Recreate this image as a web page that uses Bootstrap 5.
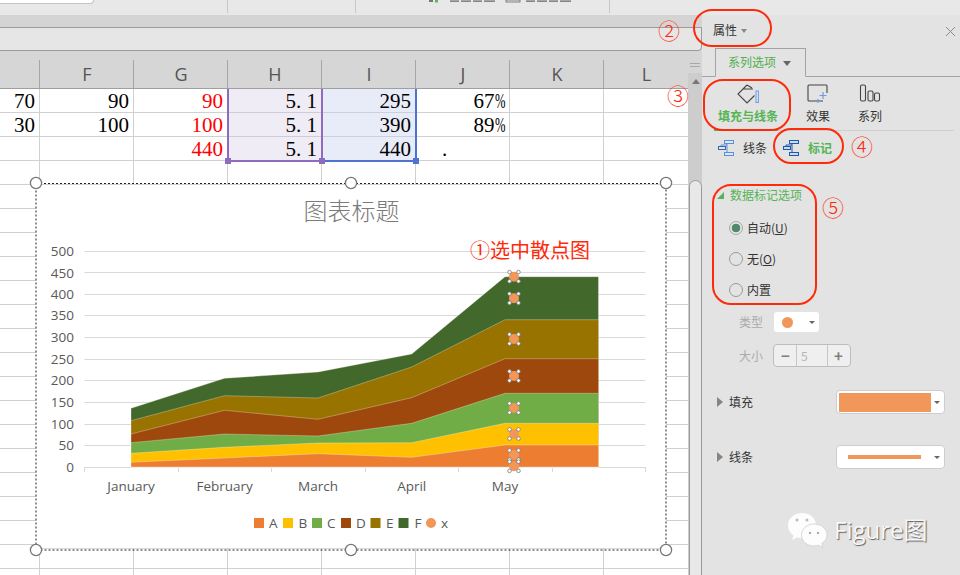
<!DOCTYPE html>
<html lang="zh">
<head>
<meta charset="utf-8">
<title>Figure</title>
<link href="https://cdn.jsdelivr.net/npm/bootstrap@5.3.0/dist/css/bootstrap.min.css" rel="stylesheet">
<style>
html,body{margin:0;height:100%}
body{width:960px;height:575px;overflow:hidden;position:relative;background:#e3e3e3;font-family:"Noto Sans CJK SC","Liberation Sans",sans-serif;font-size:12px;color:#333}
.topstrip{height:15px;background:#e8e8e8;position:relative;display:flex}
.topbox{width:94px;height:4px;background:#fff;border:solid #c4c4c4;border-width:0 1px 1px 0;border-bottom-right-radius:4px}
.topcell{height:13px;border-right:1px solid #c8c8c8}
.topw1{width:134px}.topw2{width:128px}.topw3{width:254px;position:relative}
.topmarks{position:absolute;left:73px;top:0}
.workarea{height:560px}
.sheetcol{width:702px}
.sheetband{height:13px;background:#d4d4d4;border-bottom:1px solid #9b9b9b}
.formulabar{height:23px;background:#e6e6e6;border:solid #9b9b9b;border-width:0 1px 1px 0;border-bottom-right-radius:4px}
.gridarea{height:524px;position:relative}
.sheetpane{width:688px;height:524px;position:relative;overflow:hidden;background:#fff}
.scrollstrip{width:14px;background:#cdcdcd;position:relative}
.scrollhead{height:22px;background:#d6d6d6;position:relative}
.scrollgrip{position:absolute;left:2px;top:12px;width:10px;height:4px;border:solid #a8a8a8;border-width:1px 0}
.scrollup{position:absolute;left:4px;top:28px;border:solid transparent;border-width:0 4px 5px;border-bottom-color:#777}
.scrollthumb{position:absolute;left:1px;right:0;top:129px;bottom:-2px;background:#e8e8e8;border:1px solid #999;border-radius:7px 7px 0 0}
table.sheet{width:688px;table-layout:fixed;border-collapse:separate;border-spacing:0;margin:0}
.sheet th{height:38px;background:#d6d6d6 linear-gradient(#a6a6a6,#a6a6a6) right bottom/1px 28px no-repeat;border-bottom:1px solid #9f9f9f;font:400 18px "Open Sans",sans-serif;color:#555;text-align:center;padding:9px 0 0}
.sheet td{height:24px;max-height:24px;padding:0 4px 0 0;border:solid #d0d0d0;border-width:0 1px 1px 0;background:#fff;text-align:right;font:21px/22px "Liberation Serif",serif;color:#000;overflow:hidden;white-space:nowrap}
.sheet td.redval{color:#f00}
.sheet td.selh{background:#f0ecf6;border-color:#cfcad8}
.sheet td.seli{background:#e8ecf8;border-color:#cbd0de}
.sheet td.dotcell{text-align:left;padding-left:26px}
.pct{display:inline-block;transform:scaleX(.6);transform-origin:right center;margin-left:-7px}
.col1{width:40px}.colstd{width:94px}.collast{width:85px}
.overlay{position:absolute;left:0;top:38px}
.overlay text{font-family:"Open Sans","Noto Sans CJK SC",sans-serif;font-size:13.5px;fill:#595959}
.overlay .charttitle{font-family:"Noto Sans CJK SC",sans-serif;font-size:24px;fill:#7a7a7a;font-weight:300}
.overlay .redtext{font-family:"Noto Sans CJK SC",sans-serif;font-size:20px;fill:#ff2a0a}
.sidepane{width:258px;background:#e3e3e3;position:relative}
.panehead{height:33px;padding:6px 11px 0;position:relative}
.panetitle{background:none;border:0;padding:0;font-size:12px;color:#333;line-height:18px}
.panetitle.dropdown-toggle::after{border-top:4px solid #888;border-left:3px solid transparent;border-right:3px solid transparent;margin-left:4px;vertical-align:2px}
.paneclose{position:absolute;right:4px;top:11px}
.nav-tabs.panetabs{height:29px;padding-left:13px;border-bottom:1px solid #a3a3a3;--bs-nav-tabs-border-radius:0;--bs-nav-tabs-border-width:1px}
.panetabs .nav-link,.panetabs .nav-link.active{height:29px;width:91px;padding:4px 0 0 12px;font-size:12px;line-height:18px;color:#4fb04e;background:#e3e3e3;border:1px solid #a3a3a3;border-bottom-color:#e3e3e3;text-align:left}
.panetabs .nav-link.dropdown-toggle::after{border-top:5px solid #666;border-left:4px solid transparent;border-right:4px solid transparent;margin-left:7px;vertical-align:1px}
.iconrow{height:54px;margin:0 6px 0 13px;border-bottom:1px solid #cfcfcf;padding-left:3px;position:relative}
.iconitem{display:flex;flex-direction:column;align-items:center;height:53px;padding-top:7px;font-size:12px;line-height:18px;white-space:nowrap}
.iconitem svg{height:22px;margin-bottom:1px}
.iconfirst{width:60px;color:#55b454;font-weight:700}
.iconsecond{width:24px;margin-left:28px}
.iconthird{width:24px;margin-left:28px}
.greenbar{position:absolute;left:-1px;bottom:-1px;width:64px;height:2px;background:#55b454}
.subtabs{height:34px;padding-left:16px}
.subtabs svg{flex:none}
.subgap{margin-left:9px}
.subgreen{color:#55b454;font-weight:700}
.sectionhead{height:22px;margin-top:19px;padding-left:15px;color:#55b454}
.sectionhead .tri{margin-right:6px}
.optiongroup{margin-top:6px}
.optionrow{height:31px;margin:0;padding:0 0 0 27px;display:flex;align-items:center;min-height:0}
.optionrow .form-check-input{width:14px;height:14px;margin:0 4px 0 0;float:none;background-color:#e3e3e3;border:1px solid #999;flex:none}
.optionrow .form-check-input:checked{background-image:radial-gradient(circle,#4f8a6b 0 4px,transparent 4.6px);background-color:#e3e3e3;border-color:#a8a8a8}
.optionrow .form-check-label{font-size:12px;color:#333}
.disabledrow{height:20px;margin-top:7px;padding-left:37px;color:#ababab}
.typepicker{width:45px;height:20px;margin-left:11px;background:#fff;border:0;border-radius:3px;padding:0 0 0 8px;display:flex;align-items:center;justify-content:space-between;position:relative}
.typedot{width:11px;height:11px;border-radius:50%;background:#f1975a}
.typepicker.dropdown-toggle::after,.swatchpicker.dropdown-toggle::after{border-top:3px solid #666;border-left:3px solid transparent;border-right:3px solid transparent;margin:0 4px 0 0;flex:none}
.disabledrow.sizerow{height:23px;margin-top:12px}
.spinbox.input-group{width:78px;height:23px;margin-left:10px;flex-wrap:nowrap;background:#efefef;border:1px solid #bdbdbd;border-radius:4px}
.spinbox .btn{width:23px;padding:0;border:0;border-radius:0;color:#808080;font-size:15px;font-weight:700;line-height:20px;background:none}
.spinbox .input-group-text{flex:1;padding:0 0 0 4px;border:solid #c6c6c6;border-width:0 1px;border-radius:0;margin:0;background:none;color:#b5b5b5;font-size:12px}
.proprow{height:24px;padding-left:15px}
.fillrow{margin-top:23px}
.linerow{margin-top:31px}
.tri{flex:none;margin-right:6px}
.swatchpicker{margin-left:auto;margin-right:15px;width:109px;height:24px;background:#fff;border:1px solid #cdcdcd;border-radius:4px;padding:2px 0 2px 2px;display:flex;align-items:center;justify-content:space-between}
.swatchfill{width:92px;height:19px;background:#f1975a}
.swatchline{width:73px;height:4px;background:#f1975a;margin-left:9px}
.brandrow{margin-top:43px;padding-left:85px;height:36px}
.brandtext{font:24px/36px "Open Sans","Noto Sans CJK SC",sans-serif;color:#f7f7f7;text-shadow:1px 1px 1px #5f5f5f;margin-left:6px;white-space:nowrap}
.callout{position:absolute;border:2px solid #ff2a0a;pointer-events:none}
.callout2{left:693px;top:9px;width:79px;height:38px;border-radius:19px}
.callout3{left:703px;top:79px;width:88px;height:52px;border-radius:20px}
.callout4{left:773px;top:128px;width:71px;height:36px;border-radius:18px}
.callout5{left:712px;top:184px;width:105px;height:121px;border-radius:19px}
.circlenum{position:absolute;color:#ff2a0a;font-size:22px;line-height:24px;font-family:"Noto Sans CJK SC",sans-serif;font-weight:300}
.num2{left:658px;top:17px}.num3{left:667px;top:82px}.num4{left:851px;top:133px}.num5{left:822px;top:194px}
</style>
</head>
<body>
<div class="topstrip">
  <div class="topbox"></div>
  <div class="topcell topw1"></div>
  <div class="topcell topw2"></div>
  <div class="topcell topw3">
    <svg class="topmarks" width="150" height="3" viewBox="0 0 150 3"><rect x="0" y="0" width="4" height="2" fill="#777"/><rect x="6" y="0" width="3" height="2.500" fill="#5cb85c"/><g fill="#444"><rect x="21" y=".6" width="9" height="1"/><rect x="32" y=".6" width="10" height="1"/><rect x="44" y=".6" width="9" height="1"/><rect x="55" y=".6" width="11" height="1"/><rect x="97" y=".6" width="9" height="1"/><rect x="108" y=".6" width="10" height="1"/><rect x="120" y=".6" width="9" height="1"/><rect x="131" y=".6" width="11" height="1"/></g><rect x="77" y="0" width="14" height="2" fill="none" stroke="#666" stroke-width=".8"/></svg>
  </div>
</div>
<div class="workarea d-flex">
  <div class="sheetcol d-flex flex-column">
    <div class="sheetband"></div>
    <div class="formulabar"></div>
    <div class="gridarea d-flex">
      <div class="sheetpane">
        <table class="sheet">
          <colgroup><col class="col1"><col class="colstd"><col class="colstd"><col class="colstd"><col class="colstd"><col class="colstd"><col class="colstd"><col class="collast"></colgroup>
          <thead><tr><th></th><th>F</th><th>G</th><th>H</th><th>I</th><th>J</th><th>K</th><th>L</th></tr></thead>
          <tbody>
            <tr><td>70</td><td>90</td><td class="redval">90</td><td class="selh">5. 1</td><td class="seli">295</td><td>67<span class="pct">%</span></td><td></td><td></td></tr>
            <tr><td>30</td><td>100</td><td class="redval">100</td><td class="selh">5. 1</td><td class="seli">390</td><td>89<span class="pct">%</span></td><td></td><td></td></tr>
            <tr><td></td><td></td><td class="redval">440</td><td class="selh">5. 1</td><td class="seli">440</td><td class="dotcell">.</td><td></td><td></td></tr>
            <tr><td></td><td></td><td></td><td></td><td></td><td></td><td></td><td></td></tr>
            <tr><td></td><td></td><td></td><td></td><td></td><td></td><td></td><td></td></tr>
            <tr><td></td><td></td><td></td><td></td><td></td><td></td><td></td><td></td></tr>
            <tr><td></td><td></td><td></td><td></td><td></td><td></td><td></td><td></td></tr>
            <tr><td></td><td></td><td></td><td></td><td></td><td></td><td></td><td></td></tr>
            <tr><td></td><td></td><td></td><td></td><td></td><td></td><td></td><td></td></tr>
            <tr><td></td><td></td><td></td><td></td><td></td><td></td><td></td><td></td></tr>
            <tr><td></td><td></td><td></td><td></td><td></td><td></td><td></td><td></td></tr>
            <tr><td></td><td></td><td></td><td></td><td></td><td></td><td></td><td></td></tr>
            <tr><td></td><td></td><td></td><td></td><td></td><td></td><td></td><td></td></tr>
            <tr><td></td><td></td><td></td><td></td><td></td><td></td><td></td><td></td></tr>
            <tr><td></td><td></td><td></td><td></td><td></td><td></td><td></td><td></td></tr>
            <tr><td></td><td></td><td></td><td></td><td></td><td></td><td></td><td></td></tr>
            <tr><td></td><td></td><td></td><td></td><td></td><td></td><td></td><td></td></tr>
            <tr><td></td><td></td><td></td><td></td><td></td><td></td><td></td><td></td></tr>
            <tr><td></td><td></td><td></td><td></td><td></td><td></td><td></td><td></td></tr>
            <tr><td></td><td></td><td></td><td></td><td></td><td></td><td></td><td></td></tr>
            <tr><td></td><td></td><td></td><td></td><td></td><td></td><td></td><td></td></tr>
          </tbody>
        </table>
        <svg class="overlay" width="688" height="486" viewBox="0 89 688 486">
          <defs>
            <g id="pt">
              <circle cx="0" cy="0" r="5" fill="#f1975a"/>
              <g fill="#fff" stroke="#777" stroke-width=".8"><circle cx="-4.500" cy="-4.600" r="1.800"/><circle cx="4.500" cy="-4.600" r="1.800"/><circle cx="-4.500" cy="4.600" r="1.800"/><circle cx="4.500" cy="4.600" r="1.800"/></g>
            </g>
          </defs>
          <!-- selection -->
          <rect x="227" y="89" width="2" height="73" fill="#8f6bc0"/>
          <rect x="321" y="89" width="2" height="73" fill="#8f6bc0"/>
          <rect x="415" y="89" width="2" height="73" fill="#4f72d0"/>
          <rect x="227" y="160" width="95" height="2" fill="#8f6bc0"/>
          <rect x="322" y="160" width="94" height="2" fill="#4f72d0"/>
          <rect x="225" y="158" width="6" height="6" fill="#8f6bc0"/>
          <rect x="319" y="158" width="6" height="6" fill="#8f6bc0"/>
          <rect x="413" y="158" width="6" height="6" fill="#4f72d0"/>
          <!-- chart frame -->
          <rect x="36" y="184" width="630" height="365" fill="#fff"/>
          <line x1="36" y1="184.500" x2="666" y2="184.500" stroke="#d0d0d0"/>
          <line x1="36" y1="548.500" x2="666" y2="548.500" stroke="#d8d8d8"/>
          <rect x="36" y="183.500" width="630" height="366.500" fill="none" stroke="#222" stroke-dasharray="2 2"/>
          <!-- gridlines -->
          <g stroke="#d9d9d9" stroke-width="1">
            <line x1="84.500" x2="645.500" y1="251.500" y2="251.500"/><line x1="84.500" x2="645.500" y1="272.500" y2="272.500"/>
            <line x1="84.500" x2="645.500" y1="294.500" y2="294.500"/><line x1="84.500" x2="645.500" y1="315.500" y2="315.500"/>
            <line x1="84.500" x2="645.500" y1="337.500" y2="337.500"/><line x1="84.500" x2="645.500" y1="359.500" y2="359.500"/>
            <line x1="84.500" x2="645.500" y1="380.500" y2="380.500"/><line x1="84.500" x2="645.500" y1="402.500" y2="402.500"/>
            <line x1="84.500" x2="645.500" y1="424.500" y2="424.500"/><line x1="84.500" x2="645.500" y1="445.500" y2="445.500"/>
            <line x1="84.500" x2="645.500" y1="467.500" y2="467.500"/>
            <line x1="84.500" x2="84.500" y1="467" y2="472"/><line x1="178.500" x2="178.500" y1="467" y2="472"/>
            <line x1="271.500" x2="271.500" y1="467" y2="472"/><line x1="365.500" x2="365.500" y1="467" y2="472"/>
            <line x1="458.500" x2="458.500" y1="467" y2="472"/><line x1="552.500" x2="552.500" y1="467" y2="472"/>
            <line x1="645.500" x2="645.500" y1="467" y2="472"/>
          </g>
          <!-- stacked areas -->
          <g stroke="#fff" stroke-opacity=".3" stroke-width="1">
            <polygon fill="#43682b" points="131,408.3 224.5,378.3 318,372 411.7,354 505,276.7 598.5,276.7 598.5,467 131,467"/>
            <polygon fill="#997300" points="131,420.7 224.5,395.7 318,398 411.7,367 505,319.7 598.5,319.7 598.5,467 131,467"/>
            <polygon fill="#9e480e" points="131,434 224.5,410.3 318,419.3 411.7,397.7 505,358.7 598.5,358.7 598.5,467 131,467"/>
            <polygon fill="#70ad47" points="131,442.7 224.5,434 318,436 411.7,423.3 505,393.3 598.5,393.3 598.5,467 131,467"/>
            <polygon fill="#ffc000" points="131,453.3 224.5,447.3 318,443 411.7,442.7 505,423.3 598.5,423.3 598.5,467 131,467"/>
            <polygon fill="#ed7d31" points="131,462.3 224.5,458 318,453.7 411.7,457.3 505,445 598.5,445 598.5,467 131,467"/>
          </g>
          <!-- markers -->
          <use href="#pt" x="514" y="276.700"/><use href="#pt" x="514" y="298.300"/><use href="#pt" x="514" y="339"/>
          <use href="#pt" x="514" y="376"/><use href="#pt" x="514" y="408"/><use href="#pt" x="514" y="434"/>
          <use href="#pt" x="514" y="455"/><use href="#pt" x="514" y="466.300"/>
          <!-- chart text -->
          <text class="charttitle" x="351.500" y="220" text-anchor="middle">图表标题</text>
          <text class="redtext" x="470" y="258">①选中散点图</text>
          <g text-anchor="end">
            <text x="74" y="256">500</text><text x="74" y="278">450</text><text x="74" y="299">400</text>
            <text x="74" y="320">350</text><text x="74" y="342">300</text><text x="74" y="364">250</text>
            <text x="74" y="385">200</text><text x="74" y="407">150</text><text x="74" y="429">100</text>
            <text x="74" y="450">50</text><text x="74" y="472">0</text>
          </g>
          <g text-anchor="middle">
            <text x="131" y="491">January</text><text x="224.700" y="491">February</text><text x="318" y="491">March</text>
            <text x="411.700" y="491">April</text><text x="505" y="491">May</text>
          </g>
          <!-- legend -->
          <rect x="254" y="518" width="10" height="10" fill="#ed7d31"/><text x="269" y="528">A</text>
          <rect x="283" y="518" width="10" height="10" fill="#ffc000"/><text x="298.500" y="528">B</text>
          <rect x="312" y="518" width="10" height="10" fill="#70ad47"/><text x="327" y="528">C</text>
          <rect x="341" y="518" width="10" height="10" fill="#9e480e"/><text x="356" y="528">D</text>
          <rect x="370.500" y="518" width="10" height="10" fill="#997300"/><text x="386" y="528">E</text>
          <rect x="398.500" y="518" width="10" height="10" fill="#43682b"/><text x="414.500" y="528">F</text>
          <circle cx="431" cy="523" r="5" fill="#f1975a"/><text x="441" y="528">x</text>
          <!-- frame handles -->
          <g fill="#fff" stroke="#777" stroke-width="1.300">
            <circle cx="36" cy="183" r="5.600"/><circle cx="351" cy="183" r="5.600"/><circle cx="666" cy="183" r="5.600"/>
            <circle cx="36" cy="550" r="5.600"/><circle cx="351" cy="550" r="5.600"/><circle cx="666" cy="550" r="5.600"/>
          </g>
        </svg>
      </div>
      <div class="scrollstrip">
        <div class="scrollhead"><span class="scrollgrip"></span></div>
        <span class="scrollup"></span>
        <div class="scrollthumb"></div>
      </div>
    </div>
  </div>

  <div class="sidepane d-flex flex-column">
    <div class="panehead">
      <button class="panetitle dropdown-toggle" type="button">属性</button>
      <svg class="paneclose" width="11" height="11" viewBox="0 0 11 11"><path d="M1 1 10 10M10 1 1 10" stroke="#8a8a8a" stroke-width="1" fill="none"/></svg>
    </div>
    <ul class="nav nav-tabs panetabs">
      <li class="nav-item"><a class="nav-link active dropdown-toggle" href="#">系列选项</a></li>
    </ul>
    <div class="iconrow d-flex">
      <div class="iconitem iconfirst">
        <svg width="26" height="22" viewBox="0 0 26 22"><path d="M12 1 3 10l9 9 7.500-7.500M12 1l5 3M8 5h10" fill="none" stroke="#444" stroke-width="1.100"/><rect x="21" y="7" width="2.400" height="11.500" fill="#dbe6f7" stroke="#6f9be0" stroke-width="1"/></svg>
        <span>填充与线条</span>
      </div>
      <div class="iconitem iconsecond">
        <svg width="24" height="22" viewBox="0 0 24 22"><path d="M17 17H3a1 1 0 0 1-1-1V2a1 1 0 0 1 1-1h17a1 1 0 0 1 1 1v7" fill="none" stroke="#444" stroke-width="1.100"/><path d="M17 8v7M13.500 11.500h7M12 15v4M10 17h4" stroke="#6f9be0" stroke-width="1.200" fill="none"/></svg>
        <span>效果</span>
      </div>
      <div class="iconitem iconthird">
        <svg width="24" height="22" viewBox="0 0 24 22"><g fill="none" stroke="#444" stroke-width="1.100"><rect x="2.500" y="1" width="5" height="16" rx="1.500"/><rect x="10" y="7" width="5" height="10" rx="1.500"/><rect x="16.500" y="9" width="5" height="8" rx="1.500"/></g></svg>
        <span>系列</span>
      </div>
      <span class="greenbar"></span>
    </div>
    <div class="subtabs d-flex align-items-center">
      <svg width="16" height="16" viewBox="0 0 16 16"><path d="M9 3.500v9M3 6.500V5h6" stroke="#5b8fd8" fill="none"/><g fill="#dbe8fb" stroke="#5b8fd8"><rect x="6.500" y=".5" width="9" height="3"/><rect x=".5" y="6.500" width="7" height="3" stroke="#3a66a8"/><rect x="6.500" y="12.500" width="9" height="3"/></g></svg>
      <span class="subgap">线条</span>
      <svg class="ms-3" width="16" height="16" viewBox="0 0 16 16"><path d="M9 3.500v9M3 6.500V5h6" stroke="#1f5aa8" fill="none"/><g fill="#c9dcf6" stroke="#1f5aa8"><rect x="6.500" y=".5" width="9" height="3"/><rect x=".5" y="6.500" width="7" height="3"/><rect x="6.500" y="12.500" width="9" height="3"/></g></svg>
      <span class="subgreen subgap">标记</span>
    </div>
    <div class="sectionhead d-flex align-items-center">
      <svg class="tri" width="7" height="7" viewBox="0 0 7 7"><path d="M7 0v7H0z" fill="#55b454"/></svg>
      <span>数据标记选项</span>
    </div>
    <div class="optiongroup">
      <div class="form-check optionrow"><input class="form-check-input" type="radio" name="marker" id="mAuto" checked><label class="form-check-label" for="mAuto">自动(<u>U</u>)</label></div>
      <div class="form-check optionrow"><input class="form-check-input" type="radio" name="marker" id="mNone"><label class="form-check-label" for="mNone">无(<u>O</u>)</label></div>
      <div class="form-check optionrow"><input class="form-check-input" type="radio" name="marker" id="mBuilt"><label class="form-check-label" for="mBuilt">内置</label></div>
    </div>
    <div class="disabledrow d-flex align-items-center">
      <span>类型</span>
      <button class="typepicker dropdown-toggle" type="button"><span class="typedot"></span></button>
    </div>
    <div class="disabledrow sizerow d-flex align-items-center">
      <span>大小</span>
      <div class="input-group spinbox"><button class="btn" type="button">−</button><span class="input-group-text">5</span><button class="btn" type="button">+</button></div>
    </div>
    <div class="proprow fillrow d-flex align-items-center">
      <svg class="tri" width="6" height="10" viewBox="0 0 6 10"><path d="M0 0l6 5-6 5z" fill="#858585"/></svg>
      <span>填充</span>
      <button class="swatchpicker dropdown-toggle" type="button"><span class="swatchfill"></span></button>
    </div>
    <div class="proprow linerow d-flex align-items-center">
      <svg class="tri" width="6" height="10" viewBox="0 0 6 10"><path d="M0 0l6 5-6 5z" fill="#858585"/></svg>
      <span>线条</span>
      <button class="swatchpicker dropdown-toggle" type="button"><span class="swatchline"></span></button>
    </div>
    <div class="brandrow d-flex align-items-center">
      <svg width="41" height="36" viewBox="0 0 41 36">
        <path d="M15 1C7 1 1 6.500 1 13.500c0 4 2 7.500 5.500 10L5 28l5-2.500c1.500.5 3.300.8 5 .8 8 0 14-6 14-13S23 1 15 1z" fill="#fdfdfd"/>
        <path d="M27 12c-7 0-12.500 4.800-12.500 11S20 34 27 34c1.500 0 3-.3 4.300-.7L36 35.500l-1.300-4c3.300-2 5.300-5 5.300-8.500 0-6.200-5.800-11-13-11z" fill="#fdfdfd" stroke="#cfcfcf" stroke-width=".8"/>
        <circle cx="10" cy="8" r="1.500" fill="#bbb"/><circle cx="20" cy="8" r="1.500" fill="#bbb"/>
        <circle cx="23" cy="21" r="1.200" fill="#aaa"/><circle cx="31" cy="21" r="1.200" fill="#aaa"/>
      </svg>
      <span class="brandtext">Figure图</span>
    </div>
  </div>
</div>

<div class="callout callout2"></div>
<div class="callout callout3"></div>
<div class="callout callout4"></div>
<div class="callout callout5"></div>
<span class="circlenum num2">②</span>
<span class="circlenum num3">③</span>
<span class="circlenum num4">④</span>
<span class="circlenum num5">⑤</span>
<script src="https://cdn.jsdelivr.net/npm/bootstrap@5.3.0/dist/js/bootstrap.bundle.min.js"></script>
</body>
</html>
